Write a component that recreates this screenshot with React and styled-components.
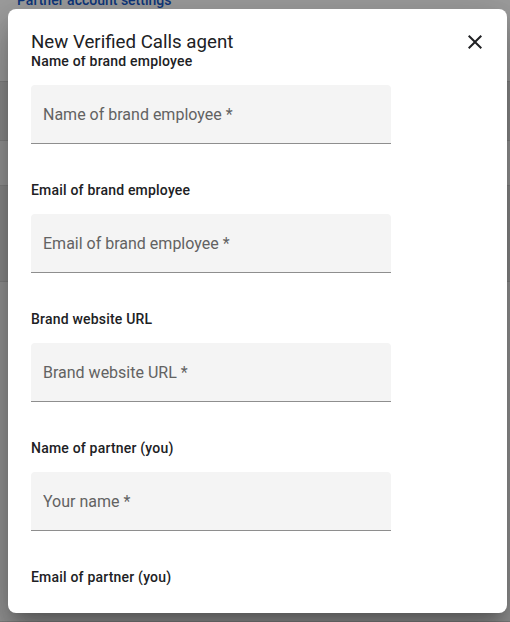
import React from 'react';
import styled, { createGlobalStyle } from 'styled-components';

const GlobalStyle = createGlobalStyle`
  * { box-sizing: border-box; }
  html, body { margin: 0; padding: 0; }
  body {
    font-family: Roboto, "Liberation Sans", Arial, sans-serif;
    -webkit-font-smoothing: antialiased;
  }
`;

const fields = [
  { label: 'Name of brand employee', placeholder: 'Name of brand employee *' },
  { label: 'Email of brand employee', placeholder: 'Email of brand employee *' },
  { label: 'Brand website URL', placeholder: 'Brand website URL *' },
  { label: 'Name of partner (you)', placeholder: 'Your name *' },
  { label: 'Email of partner (you)', placeholder: 'Your email *' },
];

// rows of the settings page behind the dialog
const pageRows = [
  { height: 82, shade: '#ffffff' },
  { height: 59, shade: '#e2e2e2' },
  { height: 45, shade: '#f3f3f3' },
  { height: 96, shade: '#dfdfdf' },
  { height: 340, shade: '#f1f1f1' },
];

const CloseIcon = () => (
  <svg width="24" height="24" viewBox="0 0 24 24" aria-hidden="true">
    <path
      fill="currentColor"
      d="M19 6.41L17.59 5 12 10.59 6.41 5 5 6.41 10.59 12 5 17.59 6.41 19 12 13.41 17.59 19 19 17.59 13.41 12z"
    />
  </svg>
);

const App = () => {
  return (
    <>
      <GlobalStyle />
      <Page>
        <PageLink href="#">Partner account settings</PageLink>
        {pageRows.map((row, i) => (
          <PageRow key={i} $height={row.height} $shade={row.shade} />
        ))}
        <Backdrop />
        <Dialog role="dialog" aria-label="New Verified Calls agent">
          <Header>
            <Title>New Verified Calls agent</Title>
            <CloseButton type="button" aria-label="Close">
              <CloseIcon />
            </CloseButton>
          </Header>
          <Body>
            <Form>
              {fields.map((f) => (
                <Field key={f.label}>
                  <Label>{f.label}</Label>
                  <Input type="text" placeholder={f.placeholder} />
                </Field>
              ))}
            </Form>
          </Body>
        </Dialog>
      </Page>
    </>
  );
};

export default App;

const Page = styled.div`
  position: relative;
  width: 510px;
  height: 622px;
  overflow: hidden;
  background: #ffffff;
`;

const PageLink = styled.a`
  position: absolute;
  top: -10px;
  left: 17px;
  font-size: 14px;
  line-height: 20px;
  font-weight: 500;
  color: #1557c9;
  text-decoration: none;
`;

const PageRow = styled.div`
  height: ${({ $height }) => $height}px;
  background: ${({ $shade }) => $shade};
  border-bottom: 1px solid #d2d2d2;
`;

const Backdrop = styled.div`
  position: absolute;
  inset: 0;
  background: rgba(0, 0, 0, 0.38);
`;

const Dialog = styled.div`
  position: absolute;
  top: 9px;
  left: 8px;
  width: 499px;
  height: 604px;
  display: flex;
  flex-direction: column;
  padding-bottom: 24px;
  background: #ffffff;
  border-radius: 8px;
  box-shadow: 0 11px 15px -7px rgba(0, 0, 0, 0.25), 0 24px 38px 3px rgba(0, 0, 0, 0.18),
    0 9px 46px 8px rgba(0, 0, 0, 0.14);
`;

const Header = styled.div`
  display: flex;
  align-items: center;
  justify-content: space-between;
  height: 47px;
  padding: 21px 20px 2px 23px;
`;

const Title = styled.h2`
  margin: 0;
  font-size: 18.7px;
  line-height: 24px;
  font-weight: 400;
  color: #202124;
`;

const CloseButton = styled.button`
  display: flex;
  align-items: center;
  justify-content: center;
  width: 24px;
  height: 24px;
  padding: 0;
  border: none;
  background: none;
  color: #202124;
  cursor: pointer;
`;

const Body = styled.div`
  flex: 1;
  overflow: hidden;
  padding: 0 23px;
`;

const Form = styled.form`
  display: flex;
  flex-direction: column;
  gap: 36px;
  margin-top: -5px;
`;

const Field = styled.div`
  display: flex;
  flex-direction: column;
  gap: 14px;
`;

const Label = styled.label`
  font-size: 14px;
  line-height: 20px;
  font-weight: 500;
  letter-spacing: 0.2px;
  color: #202124;
`;

const Input = styled.input`
  width: 360px;
  height: 59px;
  padding: 0 12px;
  border: none;
  border-bottom: 1px solid #8e8e8e;
  border-radius: 4px 4px 0 0;
  background: #f4f4f4;
  font-family: inherit;
  font-size: 16px;
  color: #202124;
  outline: none;

  &::placeholder {
    color: #626262;
    opacity: 1;
  }
`;
